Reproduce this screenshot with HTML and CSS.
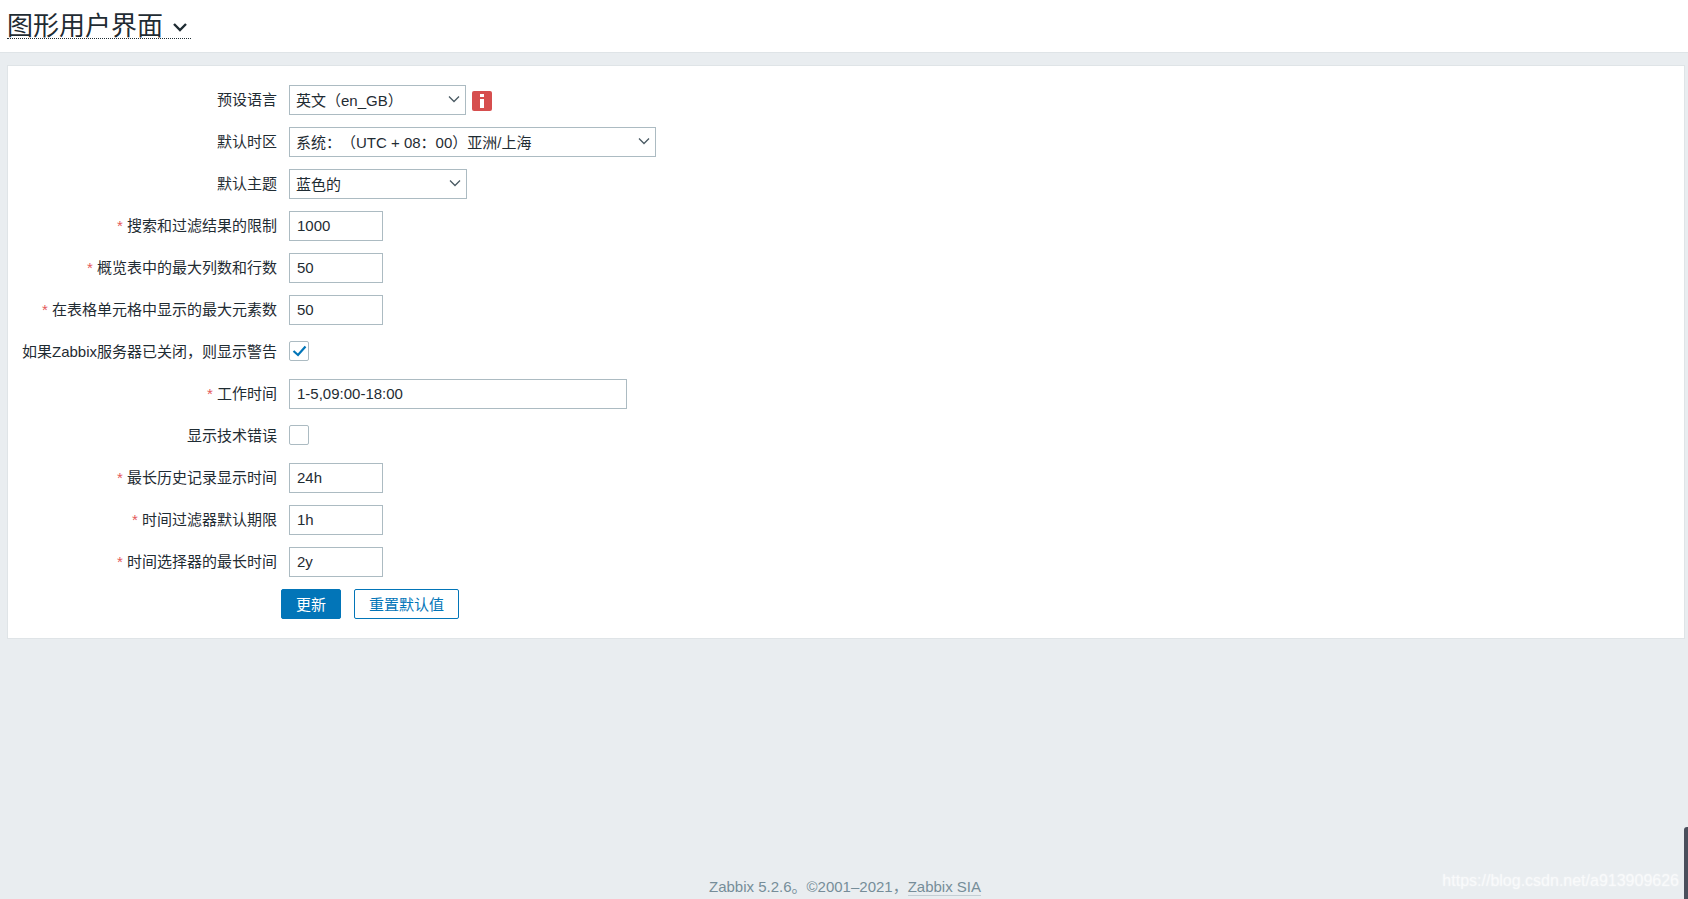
FILE: index.html
```html
<!DOCTYPE html>
<html>
<head>
    <title>图形用户界面</title>
    <link rel="stylesheet" href="styles.css">
</head>
<body>
    <header class="page-header">
        <h1 class="page-title">
            <span>图形用户界面</span>
            <svg class="title-arrow" width="16" height="10" viewBox="0 0 16 10"><path d="M2 2l6 6 6-6" fill="none" stroke="#1f2c33" stroke-width="2.4"/></svg>
        </h1>
    </header>

    <main class="content">
        <form class="card">
            <div class="form-row">
                <label class="form-label">预设语言</label>
                <div class="select select-lang">
                    <span>英文（en_GB）</span>
                    <svg class="select-arrow" width="12" height="8" viewBox="0 0 12 8"><path d="M1 1.5l5 5 5-5" fill="none" stroke="#4a5a63" stroke-width="1.3"/></svg>
                </div>
                <span class="info-icon">
                    <svg width="4" height="14" viewBox="0 0 4 14"><path d="M0 0h4v3H0zM0 5h4v9H0z" fill="white"/></svg>
                </span>
            </div>
            <div class="form-row">
                <label class="form-label">默认时区</label>
                <div class="select select-zone">
                    <span>系统：（UTC + 08：00）亚洲/上海</span>
                    <svg class="select-arrow" width="12" height="8" viewBox="0 0 12 8"><path d="M1 1.5l5 5 5-5" fill="none" stroke="#4a5a63" stroke-width="1.3"/></svg>
                </div>
            </div>
            <div class="form-row">
                <label class="form-label">默认主题</label>
                <div class="select select-theme">
                    <span>蓝色的</span>
                    <svg class="select-arrow" width="12" height="8" viewBox="0 0 12 8"><path d="M1 1.5l5 5 5-5" fill="none" stroke="#4a5a63" stroke-width="1.3"/></svg>
                </div>
            </div>
            <div class="form-row">
                <label class="form-label"><span class="required">*</span> 搜索和过滤结果的限制</label>
                <input class="input input-small" value="1000">
            </div>
            <div class="form-row">
                <label class="form-label"><span class="required">*</span> 概览表中的最大列数和行数</label>
                <input class="input input-small" value="50">
            </div>
            <div class="form-row">
                <label class="form-label"><span class="required">*</span> 在表格单元格中显示的最大元素数</label>
                <input class="input input-small" value="50">
            </div>
            <div class="form-row">
                <label class="form-label">如果Zabbix服务器已关闭，则显示警告</label>
                <span class="checkbox">
                    <svg width="15" height="12" viewBox="0 0 15 12"><path d="M1.5 6l4.5 4 7.5-8.5" fill="none" stroke="#0275b8" stroke-width="2.2"/></svg>
                </span>
            </div>
            <div class="form-row">
                <label class="form-label"><span class="required">*</span> 工作时间</label>
                <input class="input input-wide" value="1-5,09:00-18:00">
            </div>
            <div class="form-row">
                <label class="form-label">显示技术错误</label>
                <span class="checkbox"></span>
            </div>
            <div class="form-row">
                <label class="form-label"><span class="required">*</span> 最长历史记录显示时间</label>
                <input class="input input-small" value="24h">
            </div>
            <div class="form-row">
                <label class="form-label"><span class="required">*</span> 时间过滤器默认期限</label>
                <input class="input input-small" value="1h">
            </div>
            <div class="form-row">
                <label class="form-label"><span class="required">*</span> 时间选择器的最长时间</label>
                <input class="input input-small" value="2y">
            </div>
            <div class="form-actions">
                <button type="button" class="button button-primary">更新</button>
                <button type="button" class="button button-alt">重置默认值</button>
            </div>
        </form>
    </main>

    <footer class="page-footer">
        Zabbix 5.2.6。©2001–2021，<a class="footer-link">Zabbix SIA</a>
    </footer>

    <div class="watermark">https://blog.csdn.net/a913909626</div>
    <div class="scroll-thumb"></div>
</body>
</html>
```

FILE: styles.css
```css
* {
    box-sizing: border-box;
}
html, body {
    height: 100%;
}
body {
    margin: 0;
    display: flex;
    flex-direction: column;
    overflow: hidden;
    font-family: "Liberation Sans", "Noto Sans CJK SC", sans-serif;
    font-size: 15px;
    text-spacing-trim: space-all;
    color: #1f2c33;
    background-color: #e9edf0;
}
.page-header {
    height: 53px;
    padding-left: 7px;
    background-color: white;
    border-bottom: 1px solid #dfe4e7;
}
.page-title {
    display: inline-flex;
    align-items: center;
    gap: 9px;
    height: 39px;
    margin: 0;
    padding-top: 8px;
    padding-right: 3px;
    font-size: 26px;
    font-weight: normal;
    border-bottom: 1px dotted #1f2c33;
}
.title-arrow {
    margin-top: 8px;
}
.content {
    flex: 1;
    padding: 12px 3px 0 7px;
}
.card {
    height: 574px;
    padding-top: 19px;
    background-color: white;
    border: 1px solid #dfe4e7;
}
.form-row {
    display: flex;
    align-items: center;
    height: 30px;
    margin-bottom: 12px;
}
.form-label {
    width: 269px;
    margin-right: 12px;
    text-align: right;
    white-space: nowrap;
    position: relative;
    top: -2px;
}
.required {
    color: #e45959;
}
.select {
    display: flex;
    align-items: center;
    justify-content: space-between;
    height: 30px;
    padding: 0 5px 2px 6px;
    background-color: white;
    border: 1px solid #acbbc2;
}
.select-lang {
    width: 177px;
}
.select-zone {
    width: 367px;
}
.select-theme {
    width: 178px;
}
.input {
    height: 30px;
    padding: 0 7px 2px;
    font-family: inherit;
    font-size: 15px;
    color: #1f2c33;
    background-color: white;
    border: 1px solid #acbbc2;
    border-radius: 0;
    outline: none;
}
.input-small {
    width: 94px;
}
.input-wide {
    width: 338px;
}
.info-icon {
    display: flex;
    align-items: center;
    justify-content: center;
    width: 20px;
    height: 20px;
    margin-left: 6px;
    margin-top: 2px;
    background-color: #d64e4e;
    border-radius: 2px;
}
.checkbox {
    display: flex;
    align-items: center;
    justify-content: center;
    width: 20px;
    height: 20px;
    margin-top: -2px;
    background-color: white;
    border: 1px solid #acbbc2;
    border-radius: 2px;
}
.form-actions {
    display: flex;
    gap: 13px;
    padding-left: 273px;
}
.button {
    height: 30px;
    padding: 0 0 2px;
    font-family: inherit;
    font-size: 15px;
    border-radius: 2px;
    cursor: pointer;
}
.button-primary {
    width: 60px;
    color: white;
    background-color: #0275b8;
    border: 1px solid #0275b8;
}
.button-alt {
    width: 105px;
    color: #0275b8;
    background-color: white;
    border: 1px solid #0275b8;
}
.page-footer {
    height: 21px;
    padding-left: 2px;
    text-align: center;
    color: #768d99;
    line-height: 17px;
}
.footer-link {
    border-bottom: 1px solid #c3ced4;
}
.watermark {
    position: absolute;
    right: 9px;
    bottom: 9px;
    font-size: 16px;
    color: rgba(255,255,255,0.6);
    text-shadow: 0 0 2px rgba(255,255,255,0.6);
}
.scroll-thumb {
    position: absolute;
    right: 0;
    bottom: 0;
    width: 4px;
    height: 72px;
    background-color: #4a4f5c;
    border-radius: 3px 0 0 0;
}
```
